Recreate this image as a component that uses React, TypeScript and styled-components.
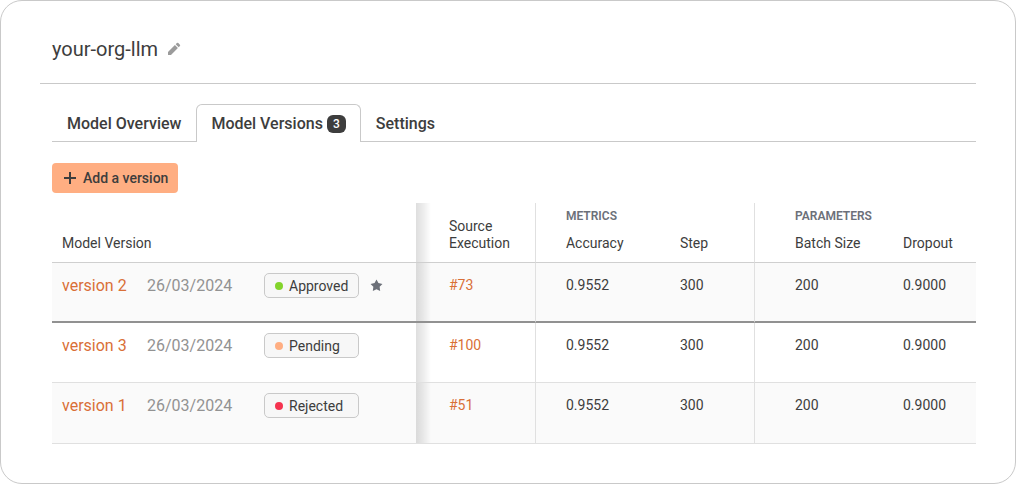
import React from "react";
import styled, { createGlobalStyle } from "styled-components";

const GlobalStyle = createGlobalStyle`
  *, *::before, *::after { box-sizing: border-box; }
  body {
    margin: 0;
    background: #fff;
    color: #3d3d3d;
    font-family: Roboto, "Liberation Sans", sans-serif;
    font-size: 14px;
    line-height: 18px;
  }
`;

const Card = styled.main`
  min-height: 100vh;
  padding: 0 39px 39px;
  border: 1px solid #c9c9c9;
  border-radius: 22px;
  background: #fff;
`;

const Header = styled.header`
  display: flex;
  align-items: center;
  gap: 8px;
  height: 83px;
  padding: 25px 12px 12px;
  border-bottom: 1px solid #c9c9c9;
`;

const Title = styled.h1`
  margin: 0;
  font-size: 20px;
  line-height: 24px;
  font-weight: 400;
`;

const IconButton = styled.button`
  display: flex;
  padding: 0;
  border: 0;
  background: none;
  color: #9b9b9b;
  cursor: pointer;
`;

const Content = styled.div`
  padding: 20px 0 0 12px;
`;

const Tabs = styled.nav`
  display: flex;
  height: 38px;
  box-shadow: inset 0 -1px #c9c9c9;
`;

const Tab = styled.a<{ $active?: boolean }>`
  display: flex;
  align-items: center;
  gap: 4px;
  padding: 0 14px;
  border: 1px solid ${(p) => (p.$active ? "#c9c9c9" : "transparent")};
  border-bottom: 0;
  border-radius: 6px 6px 0 0;
  background: ${(p) => (p.$active ? "#fff" : "transparent")};
  color: inherit;
  font-size: 16px;
  font-weight: 500;
  text-decoration: none;
  white-space: nowrap;
`;

const Count = styled.span`
  width: 19px;
  height: 18px;
  border-radius: 6px;
  background: #3d3d3d;
  color: #fff;
  font-size: 12px;
  text-align: center;
`;

const AddButton = styled.button`
  display: flex;
  align-items: center;
  gap: 7px;
  height: 30px;
  margin: 21px 0 10px;
  padding: 0 10px 0 12px;
  border: 0;
  border-radius: 4px;
  background: #ffae82;
  color: #3d3d3d;
  font: 500 14px/18px Roboto, "Liberation Sans", sans-serif;
  cursor: pointer;
`;

const Table = styled.table`
  width: 100%;
  table-layout: fixed;
  border-collapse: separate;
  border-spacing: 0;
  text-align: left;
`;

const Col = styled.col<{ $width?: number }>`
  width: ${(p) => (p.$width ? `${p.$width}px` : "auto")};
`;

type CellKind = "version" | "source" | "metric" | "parameter" | "last";

const indent: Record<CellKind, number> = {
  version: 10,
  source: 33,
  metric: 30,
  parameter: 40,
  last: 30,
};

const shadow = `
  background-image: linear-gradient(to right, rgba(0, 0, 0, 0.13), rgba(0, 0, 0, 0.08) 45%, transparent);
  background-size: 15px 100%;
  background-repeat: repeat-y;
`;

const GroupHeading = styled.th<{ $kind: CellKind; $divider?: boolean }>`
  height: 27px;
  padding: 0 0 2px ${(p) => indent[p.$kind]}px;
  border-right: ${(p) => (p.$divider ? "1px solid #e0e0e0" : "0")};
  color: #6c7079;
  font-size: 12px;
  font-weight: 600;
  vertical-align: middle;
`;

const Heading = styled.th<{ $kind: CellKind; $divider?: boolean }>`
  height: 33px;
  padding: 0 0 10px ${(p) => indent[p.$kind]}px;
  border-bottom: 1px solid #cfcfcf;
  border-right: ${(p) => (p.$divider ? "1px solid #e0e0e0" : "0")};
  line-height: 17px;
  font-weight: 400;
  vertical-align: bottom;
  ${(p) => p.$kind === "source" && shadow}
`;

const Cell = styled.td<{ $kind: CellKind; $divider?: boolean }>`
  padding: 13px 0 0 ${(p) => indent[p.$kind]}px;
  border-bottom: 1px solid #e0e0e0;
  border-right: ${(p) => (p.$divider ? "1px solid #e0e0e0" : "0")};
  vertical-align: top;
  ${(p) => p.$kind === "source" && shadow}
`;

const Row = styled.tr<{ $pinned?: boolean }>`
  height: 60px;
  &:nth-child(odd) { background: #fafafa; }
  &:last-child { height: 61px; }
  ${(p) => p.$pinned && `${Cell} { border-bottom: 2px solid #919191; }`}
`;

const VersionCell = styled(Cell)`
  padding-top: 10px;
  font-size: 16px;
`;

const VersionLine = styled.div`
  display: flex;
  align-items: center;
  white-space: nowrap;
`;

const Link = styled.a`
  color: #d96f37;
  text-decoration: none;
`;

const VersionLink = styled(Link)`
  width: 85px;
`;

const Released = styled.time`
  width: 117px;
  color: #929292;
`;

const Badge = styled.span<{ $color: string }>`
  display: flex;
  align-items: center;
  gap: 6px;
  width: 95px;
  height: 25px;
  padding-left: 10px;
  border: 1px solid #c9c9c9;
  border-radius: 5px;
  background: #f7f7f7;
  font-size: 14px;
  &::before {
    content: "";
    width: 8px;
    height: 8px;
    border-radius: 50%;
    background: ${(p) => p.$color};
  }
`;

const Star = styled.svg`
  margin-left: 11px;
  fill: #6c7079;
`;

const versions = [
  { name: "version 2", status: "Approved", color: "#83d42c", execution: "#73", pinned: true },
  { name: "version 3", status: "Pending", color: "#ffae82", execution: "#100", pinned: false },
  { name: "version 1", status: "Rejected", color: "#f5334f", execution: "#51", pinned: false },
];

export default function App() {
  return (
    <>
      <GlobalStyle />
      <Card>
        <Header>
          <Title>your-org-llm</Title>
          <IconButton type="button" aria-label="Rename model">
            <svg width="16" height="16" viewBox="0 0 16 16" fill="currentColor">
              <path d="M2 11 8.900 4.100 11.900 7.100 5 14H2zM9.700 3.300 10.900 2.100a1 1 0 0 1 1.400 0l1.600 1.600a1 1 0 0 1 0 1.400L12.700 6.300z" />
            </svg>
          </IconButton>
        </Header>
        <Content>
          <Tabs>
            <Tab href="#overview">Model Overview</Tab>
            <Tab href="#versions" $active aria-current="page">
              Model Versions <Count>3</Count>
            </Tab>
            <Tab href="#settings">Settings</Tab>
          </Tabs>
          <AddButton type="button">
            <svg width="12" height="12" viewBox="0 0 12 12" stroke="currentColor" strokeWidth="2">
              <path d="M6 0v12M0 6h12" />
            </svg>
            Add a version
          </AddButton>
          <Table>
            <colgroup>
              <Col />
              <Col $width={120} />
              <Col $width={114} />
              <Col $width={105} />
              <Col $width={118} />
              <Col $width={103} />
            </colgroup>
            <thead>
              <tr>
                <Heading $kind="version" rowSpan={2}>Model Version</Heading>
                <Heading $kind="source" $divider rowSpan={2}>
                  Source<br />Execution
                </Heading>
                <GroupHeading $kind="metric" colSpan={2} $divider>METRICS</GroupHeading>
                <GroupHeading $kind="parameter" colSpan={2}>PARAMETERS</GroupHeading>
              </tr>
              <tr>
                <Heading $kind="metric">Accuracy</Heading>
                <Heading $kind="metric" $divider>Step</Heading>
                <Heading $kind="parameter">Batch Size</Heading>
                <Heading $kind="last">Dropout</Heading>
              </tr>
            </thead>
            <tbody>
              {versions.map((v) => (
                <Row key={v.name} $pinned={v.pinned}>
                  <VersionCell $kind="version">
                    <VersionLine>
                      <VersionLink href="#version">{v.name}</VersionLink>
                      <Released dateTime="2024-03-26">26/03/2024</Released>
                      <Badge $color={v.color}>{v.status}</Badge>
                      {v.pinned && (
                        <Star width="13" height="13" viewBox="0 0 24 24" role="img" aria-label="Promoted">
                          <path d="M12 1 15.600 7.600 23 9 17.800 14.500 18.800 22 12 18.800 5.200 22 6.200 14.500 1 9 8.400 7.600z" />
                        </Star>
                      )}
                    </VersionLine>
                  </VersionCell>
                  <Cell $kind="source" $divider>
                    <Link href="#execution">{v.execution}</Link>
                  </Cell>
                  <Cell $kind="metric">0.9552</Cell>
                  <Cell $kind="metric" $divider>300</Cell>
                  <Cell $kind="parameter">200</Cell>
                  <Cell $kind="last">0.9000</Cell>
                </Row>
              ))}
            </tbody>
          </Table>
        </Content>
      </Card>
    </>
  );
}
